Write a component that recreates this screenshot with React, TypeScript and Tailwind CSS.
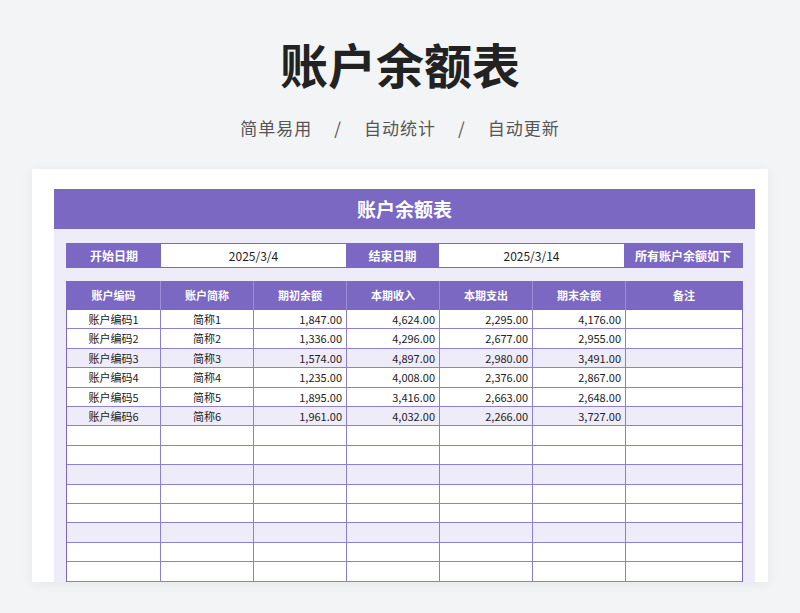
const F = { fontFamily: '"Noto Sans CJK SC","Noto Sans",sans-serif' };
const cols = ['w-[94px]','w-[93px]','w-[93px]','w-[93px]','w-[93px]','w-[93px]','flex-1'];
const heads = ['账户编码','账户简称','期初余额','本期收入','本期支出','期末余额','备注'];
const data = [
  ['1,847.00','4,624.00','2,295.00','4,176.00'],
  ['1,336.00','4,296.00','2,677.00','2,955.00'],
  ['1,574.00','4,897.00','2,980.00','3,491.00'],
  ['1,235.00','4,008.00','2,376.00','2,867.00'],
  ['1,895.00','3,416.00','2,663.00','2,648.00'],
  ['1,961.00','4,032.00','2,266.00','3,727.00'],
];
export default function App() {
  const rows = Array.from({ length: 14 }, (_, i) => i);
  return (
    <div style={F} className="w-[800px] h-[613px] bg-[#f3f4f6] overflow-hidden flex flex-col items-center">
      <h1 className="mt-[33px] text-[48px] leading-[60px] font-bold text-[#222]">账户余额表</h1>
      <div className="mt-[22px] text-[17px] text-[#555] tracking-[1px] flex gap-[22px]">
        <span>简单易用</span><span>/</span><span>自动统计</span><span>/</span><span>自动更新</span>
      </div>
      <div className="mt-[28px] w-[736px] h-[413px] bg-white shadow-[0_2px_12px_rgba(0,0,0,0.06)] px-[22px] pt-[20px]">
        <div className="w-[701px] h-full flex flex-col">
          <div className="h-[41px] bg-[#7a68c3] text-white text-[19px] font-bold flex items-center justify-center">账户余额表</div>
          <div className="flex-1 bg-[#efecf9] px-[12px] pt-[14px] flex flex-col">
            <div className="h-[25px] bg-[#7a68c3] flex items-stretch text-[12px] p-[1px]">
              <div className="w-[94px] text-white font-bold flex items-center justify-center">开始日期</div>
              <div className="w-[185px] bg-white flex items-center justify-center text-[#222]">2025/3/4</div>
              <div className="w-[93px] text-white font-bold flex items-center justify-center">结束日期</div>
              <div className="w-[185px] bg-white flex items-center justify-center text-[#222]">2025/3/14</div>
              <div className="flex-1 text-white font-bold flex items-center justify-center">所有账户余额如下</div>
            </div>
            <div className="mt-[13px] border-l border-r border-[#7a68c3] text-[11px]">
              <div className="h-[29px] bg-[#7a68c3] flex text-white font-bold">
                {heads.map((h, i) => (
                  <div key={i} className={`${cols[i]} flex items-center justify-center ${i < 6 ? 'border-r border-[#9b8ed6]' : ''}`}>{h}</div>
                ))}
              </div>
              {rows.map((r) => {
                const d = data[r];
                const cells = d ? [`账户编码${r + 1}`, `简称${r + 1}`, ...d, ''] : ['', '', '', '', '', '', ''];
                return (
                  <div key={r} className={`h-[19.4px] flex border-b border-[#8d80d2] text-[#222] ${r % 3 === 2 ? 'bg-[#efecf9]' : 'bg-white'}`}>
                    {cells.map((c, i) => (
                      <div key={i} className={`${cols[i]} flex items-center ${i < 2 ? 'justify-center' : 'justify-end pr-[4px]'} ${i < 6 ? 'border-r border-[#8d80d2]' : ''}`}>{c}</div>
                    ))}
                  </div>
                );
              })}
            </div>
          </div>
        </div>
      </div>
    </div>
  );
}
